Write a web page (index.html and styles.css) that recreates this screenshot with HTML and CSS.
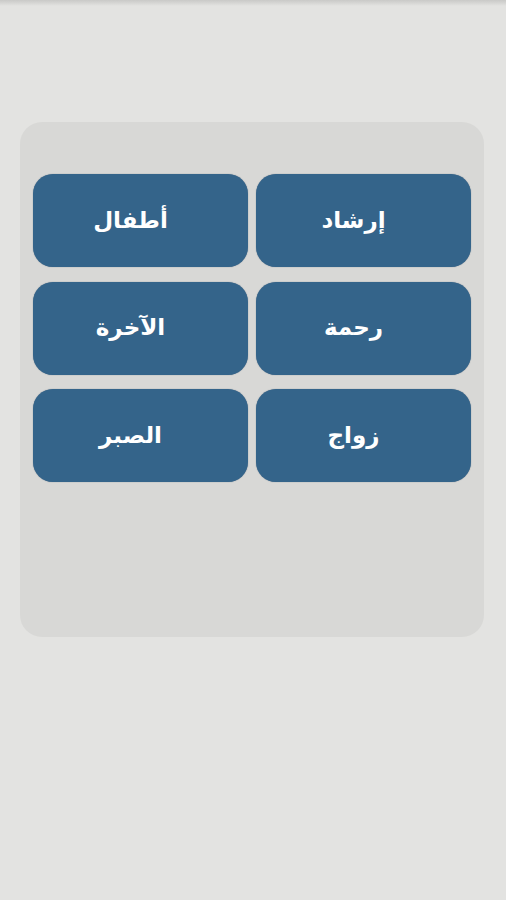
FILE: index.html
```html
<!DOCTYPE html>
<html lang="ar" dir="rtl">
<head>
	<title>مواضيع</title>
	<meta charset="utf-8">
	<meta name="viewport" content="width=device-width, initial-scale=1.0">
	<link rel="stylesheet" href="styles.css">
</head>
<body>
	<div class="topbar"></div>
	<div class="panel">
		<div class="grid">
			<button class="topic">إرشاد</button>
			<button class="topic">أطفال</button>
			<button class="topic">رحمة</button>
			<button class="topic">الآخرة</button>
			<button class="topic">زواج</button>
			<button class="topic">الصبر</button>
		</div>
	</div>
</body>
</html>
```

FILE: styles.css
```css
*{
	padding: 0;
	margin: 0;
	box-sizing: border-box;
}
body{
	background-color: #e3e3e1;
	font-family: "DejaVu Sans", sans-serif;
	min-height: 900px;
}
.topbar{
	height: 6px;
	background: linear-gradient(#c9c9c7, #e3e3e1);
}
.panel{
	margin: 116px 22px 0 20px;
	height: 515px;
	background-color: #d8d8d6;
	border-radius: 22px;
	padding: 52px 13px 0 13px;
}
.grid{
	display: grid;
	grid-template-columns: 1fr 1fr;
	grid-auto-rows: 93px;
	column-gap: 8px;
	row-gap: 14.5px;
}
.topic{
	border: none;
	border-radius: 20px;
	background-color: #34648a;
	color: white;
	font-family: "DejaVu Sans", sans-serif;
	font-weight: bold;
	font-size: 23px;
	padding-right: 20px;
	padding-bottom: 2px;
	box-shadow: 0 0 1px rgba(20, 50, 80, .6);
}
```
